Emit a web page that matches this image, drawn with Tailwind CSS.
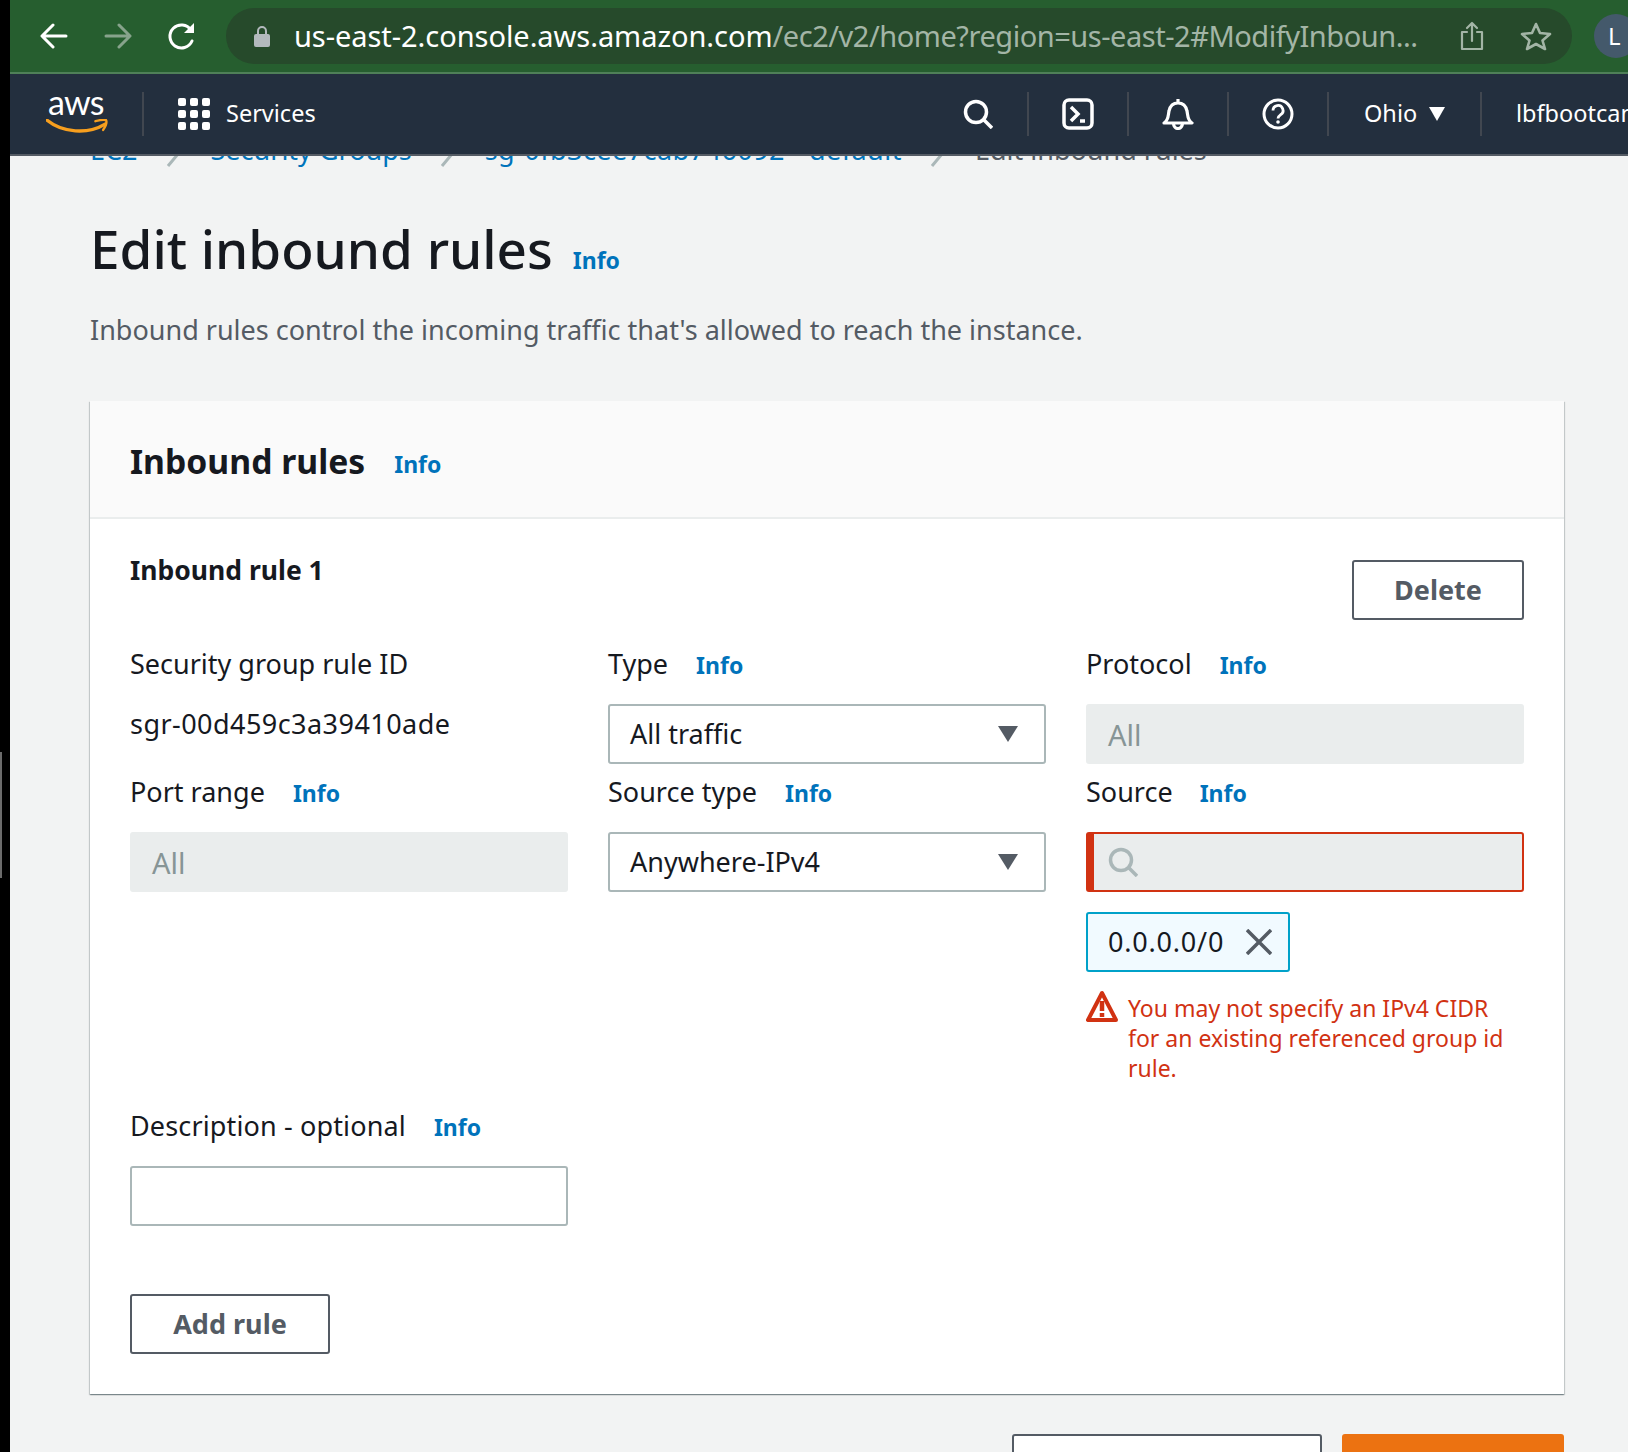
<!DOCTYPE html>
<html lang="en">
<head>
  <meta charset="UTF-8" />
  <title>Edit inbound rules</title>
  <script src="https://cdn.jsdelivr.net/npm/@tailwindcss/browser@4"></script>
</head>
<body class="bg-black font-['Noto_Sans',sans-serif] text-[#16191f]">
  <div class="flex w-[1628px] h-[1452px] overflow-hidden relative">
    <div class="w-[10px] shrink-0 bg-black">
      <div class="w-[2px] h-[126px] mt-[752px] bg-[#6b6b6b]"></div>
    </div>
    <div class="w-[1618px] shrink-0 flex flex-col overflow-hidden bg-[#f2f3f3]">

      <!-- browser toolbar -->
      <div class="h-[74px] shrink-0 bg-[#265e2f] border-b-2 border-[#4f8058] flex items-center">
        <svg class="w-[28px] h-[28px] ml-[30px] shrink-0" viewBox="0 0 28 28" fill="none" stroke="#fff" stroke-width="3" stroke-linecap="round" stroke-linejoin="round"><path d="M26 14H3M13 3 2 14l11 11"/></svg>
        <svg class="w-[28px] h-[28px] ml-[36px] shrink-0" viewBox="0 0 28 28" fill="none" stroke="#87a38c" stroke-width="3" stroke-linecap="round" stroke-linejoin="round"><path d="M2 14h23M15 3l11 11-11 11"/></svg>
        <svg class="w-[30px] h-[30px] ml-[35px] shrink-0" viewBox="0 0 30 30" fill="none" stroke="#fff" stroke-width="3" stroke-linecap="round"><path d="M25 20a11.500 11.500 0 1 1-1-11"/><path d="M27 2v10H17z" fill="#fff" stroke="none"/></svg>
        <div class="ml-[29px] w-[1346px] h-[56px] shrink-0 rounded-full bg-[#264a2b] flex items-center">
          <svg class="w-[18px] h-[24px] ml-[27px] shrink-0" viewBox="0 0 18 24"><path d="M5 11V7a4 4 0 0 1 8 0v4" fill="none" stroke="#b3b9bd" stroke-width="2"/><rect x="1" y="10" width="16" height="13" rx="2" fill="#b3b9bd"/></svg>
          <p class="ml-[23px] w-[1134px] shrink-0 text-[29px] leading-[56px] whitespace-nowrap overflow-hidden"><span class="text-white tracking-[-0.05px]">us-east-2.console.aws.amazon.com</span><span class="text-[#a3b5a6] tracking-[-0.47px]">/ec2/v2/home?region=us-east-2#ModifyInboun...</span></p>
          <svg class="w-[24px] h-[30px] ml-[32px] shrink-0" viewBox="0 0 24 30" fill="none" stroke="#a3b5a6" stroke-width="2.200" stroke-linecap="round" stroke-linejoin="round"><path d="M7 11H2v17h20V11h-5M12 20V2M7 7l5-5 5 5"/></svg>
          <svg class="w-[32px] h-[30px] ml-[36px] shrink-0" viewBox="0 0 32 30" fill="none" stroke="#a3b5a6" stroke-width="2.600" stroke-linejoin="round"><path d="m16 3 4 9 10 1-7.500 6.500L25 28l-9-5-9 5 2.500-8.500L2 13l10-1z"/></svg>
        </div>
        <div class="ml-[22px] w-[44px] h-[44px] shrink-0 rounded-full bg-[#44596b] text-white text-[24px] leading-[44px] pl-[14px]">L</div>
      </div>

      <!-- aws console nav -->
      <div class="h-[82px] shrink-0 relative z-10 bg-[#232f3e] border-b-2 border-[#545b64] flex items-center text-white">
        <div class="w-[134px] h-[44px] shrink-0 border-r-2 border-[#414750] pl-[36px] flex flex-col items-start">
          <span class="text-[34px] leading-[34px] -mt-[7px] ml-[2px] font-['Lato',sans-serif] tracking-tight">aws</span>
          <svg class="w-[62px] h-[15px] mt-0" viewBox="0 0 64 15" fill="none"><path d="M1 1c16 13 42 15 60 4" stroke="#f79f1e" stroke-width="3.500" stroke-linecap="round"/><path d="M51 2c4-1 9-2 11-1 1 2-1 7-3 10" stroke="#f79f1e" stroke-width="2.500" stroke-linecap="round"/></svg>
        </div>
        <div class="ml-[34px] w-[32px] h-[32px] shrink-0 grid grid-cols-3 gap-[4px]">
          <i class="rounded-[2px] bg-white"></i><i class="rounded-[2px] bg-white"></i><i class="rounded-[2px] bg-white"></i>
          <i class="rounded-[2px] bg-white"></i><i class="rounded-[2px] bg-white"></i><i class="rounded-[2px] bg-white"></i>
          <i class="rounded-[2px] bg-white"></i><i class="rounded-[2px] bg-white"></i><i class="rounded-[2px] bg-white"></i>
        </div>
        <span class="ml-[16px] w-[703px] shrink-0 text-[23.500px]">Services</span>
        <div class="w-[100px] h-[44px] shrink-0 border-r-2 border-[#414750] flex items-center justify-center">
          <svg class="w-[30px] h-[30px]" viewBox="0 0 30 30" fill="none" stroke="#fff" stroke-width="3.500"><circle cx="13" cy="13" r="10.500"/><path d="m20 20 9 9"/></svg>
        </div>
        <div class="w-[100px] h-[44px] shrink-0 border-r-2 border-[#414750] flex items-center justify-center">
          <svg class="w-[32px] h-[32px]" viewBox="0 0 32 32" fill="none" stroke="#fff" stroke-width="3.500"><rect x="2" y="2" width="28" height="28" rx="5"/><path d="m9 9 7 7-7 7M18 23h5"/></svg>
        </div>
        <div class="w-[100px] h-[44px] shrink-0 border-r-2 border-[#414750] flex items-center justify-center">
          <svg class="w-[32px] h-[32px]" viewBox="0 0 32 32" fill="none" stroke="#fff" stroke-width="3.200" stroke-linejoin="round"><path d="M16 1v4M2 25c5-3 4-8 5-12 1-5 4-8 9-8s8 3 9 8c1 4 0 9 5 12z"/><path d="M11.500 25a4.500 5.500 0 1 0 9 0"/></svg>
        </div>
        <div class="w-[100px] h-[44px] shrink-0 border-r-2 border-[#414750] flex items-center justify-center">
          <svg class="w-[32px] h-[32px]" viewBox="0 0 32 32" fill="none" stroke="#fff" stroke-width="3"><circle cx="16" cy="16" r="14"/><path d="M11 12.500a5 5 0 1 1 7.500 4.300c-1.500 1-2.500 1.700-2.500 3.700" stroke-width="2.800"/><circle cx="16" cy="24" r="1.800" fill="#fff" stroke="none"/></svg>
        </div>
        <div class="w-[153px] h-[44px] shrink-0 border-r-2 border-[#414750] flex items-center pl-[35px]">
          <span class="text-[23.500px]">Ohio</span>
          <svg class="w-[16px] h-[14px] ml-[12px]" viewBox="0 0 16 14"><path d="M0 0h16L8 14z" fill="#fff"/></svg>
        </div>
        <span class="ml-[34px] text-[23.500px] whitespace-nowrap">lbfbootcamp</span>
      </div>

      <!-- page body -->
      <div class="pl-[80px] pr-[64px] overflow-hidden">
        <div class="-mt-[21px] h-[30px] flex items-center text-[27px] text-[#0073bb] whitespace-nowrap">
          <span>EC2</span>
          <svg class="w-[14px] h-[26px] ml-[28px] mr-[31px] translate-y-[4px]" viewBox="0 0 14 26" fill="none" stroke="#aab7b8" stroke-width="3"><path d="m2 1 10 12L2 25"/></svg>
          <span>Security Groups</span>
          <svg class="w-[14px] h-[26px] ml-[28px] mr-[31px] translate-y-[4px]" viewBox="0 0 14 26" fill="none" stroke="#aab7b8" stroke-width="3"><path d="m2 1 10 12L2 25"/></svg>
          <span class="tracking-[0.45px]">sg-0fb3cee7cab746092 - default</span>
          <svg class="w-[14px] h-[26px] ml-[28px] mr-[31px] translate-y-[4px]" viewBox="0 0 14 26" fill="none" stroke="#aab7b8" stroke-width="3"><path d="m2 1 10 12L2 25"/></svg>
          <span class="text-[#545b64]">Edit inbound rules</span>
        </div>

        <div class="mt-[45px] flex items-baseline">
          <h1 class="text-[53px] leading-[78px] font-medium">Edit inbound rules</h1>
          <a class="ml-[20px] text-[23px] font-bold text-[#0073bb]">Info</a>
        </div>
        <p class="mt-[22px] text-[27px] leading-[40px] text-[#545b64]">Inbound rules control the incoming traffic that's allowed to reach the instance.</p>

        <!-- card -->
        <div class="mt-[51px] h-[993px] bg-white shadow-[0_1px_1px_0_rgba(0,28,36,0.3),1px_1px_1px_0_rgba(0,28,36,0.15),-1px_1px_1px_0_rgba(0,28,36,0.15)]">
          <div class="h-[118px] pt-[5px] bg-[#fafafa] border-b-2 border-[#eaeded] px-[40px] flex items-center">
            <h2 class="text-[33.700px] font-bold">Inbound rules</h2>
            <a class="ml-[29px] mt-[6px] text-[23px] font-bold text-[#0073bb]">Info</a>
          </div>
          <div class="px-[40px] pt-[41px]">
            <div class="flex justify-between h-[88px]">
              <h3 class="-mt-[1px] text-[26.500px] font-bold leading-[22px]">Inbound rule 1</h3>
              <button class="w-[172px] h-[60px] rounded-[3px] border-2 border-[#545b64] bg-white text-[27px] font-bold text-[#545b64]">Delete</button>
            </div>
            <div class="grid grid-cols-3 gap-x-[40px] gap-y-[12px]">
              <div class="h-[116px]">
                <p class="h-[32px] text-[27px] leading-[32px]">Security group rule ID</p>
                <p class="mt-[28px] text-[27px] leading-[32px] tracking-[0.45px]">sgr-00d459c3a39410ade</p>
              </div>
              <div>
                <p class="h-[32px] text-[27px] leading-[32px]">Type<a class="ml-[28px] text-[23px] font-bold text-[#0073bb]">Info</a></p>
                <div class="mt-[24px] h-[60px] rounded-[3px] border-2 border-[#aab7b8] bg-white pl-[20px] pr-[26px] flex items-center justify-between text-[27px]">
                  <span>All traffic</span>
                  <svg class="w-[20px] h-[16px]" viewBox="0 0 20 16"><path d="M0 0h20L10 16z" fill="#545b64"/></svg>
                </div>
              </div>
              <div>
                <p class="h-[32px] text-[27px] leading-[32px]">Protocol<a class="ml-[28px] text-[23px] font-bold text-[#0073bb]">Info</a></p>
                <div class="mt-[24px] h-[60px] rounded-[3px] bg-[#eaeded] pl-[22px] pt-[2px] flex items-center text-[29px] text-[#879596]">All</div>
              </div>

              <div>
                <p class="h-[32px] text-[27px] leading-[32px]">Port range<a class="ml-[28px] text-[23px] font-bold text-[#0073bb]">Info</a></p>
                <div class="mt-[24px] h-[60px] rounded-[3px] bg-[#eaeded] pl-[22px] pt-[2px] flex items-center text-[29px] text-[#879596]">All</div>
              </div>
              <div>
                <p class="h-[32px] text-[27px] leading-[32px]">Source type<a class="ml-[28px] text-[23px] font-bold text-[#0073bb]">Info</a></p>
                <div class="mt-[24px] h-[60px] rounded-[3px] border-2 border-[#aab7b8] bg-white pl-[20px] pr-[26px] flex items-center justify-between text-[27px]">
                  <span>Anywhere-IPv4</span>
                  <svg class="w-[20px] h-[16px]" viewBox="0 0 20 16"><path d="M0 0h20L10 16z" fill="#545b64"/></svg>
                </div>
              </div>
              <div class="h-[322px]">
                <p class="h-[32px] text-[27px] leading-[32px]">Source<a class="ml-[27px] text-[23px] font-bold text-[#0073bb]">Info</a></p>
                <div class="mt-[24px] h-[60px] rounded-[3px] border-2 border-l-[8px] border-[#d13212] bg-[#eaeded] pl-[14px] flex items-center">
                  <svg class="w-[30px] h-[30px]" viewBox="0 0 30 30" fill="none" stroke="#aab7b8" stroke-width="3.500"><circle cx="13" cy="13" r="10.500"/><path d="m20 20 9 9"/></svg>
                </div>
                <div class="mt-[20px] w-[204px] h-[60px] rounded-[3px] border-2 border-[#00a1c9] bg-[#f1faff] pl-[20px] flex items-center text-[27px]">
                  <span class="tracking-[0.8px]">0.0.0.0/0</span>
                  <svg class="w-[26px] h-[26px] ml-[22px]" viewBox="0 0 26 26" fill="none" stroke="#545b64" stroke-width="3.500"><path d="m1 1 24 24M25 1 1 25"/></svg>
                </div>
                <div class="mt-[21px] flex items-start text-[23px] leading-[30px] text-[#d13212]">
                  <svg class="w-[32px] h-[32px] shrink-0 -mt-[3px]" viewBox="0 0 32 32" fill="none"><path d="M16 3 2 30h28z" stroke="#d13212" stroke-width="4" stroke-linejoin="round"/><path d="M16 11v10M16 23v4" stroke="#d13212" stroke-width="4.500"/></svg>
                  <p class="ml-[10px]">You may not specify an IPv4 CIDR for an existing referenced group id rule.</p>
                </div>
              </div>

              <div>
                <p class="h-[32px] text-[27px] leading-[32px] whitespace-nowrap"><span class="tracking-[0.14px]">Description - optional</span><a class="ml-[28px] text-[23px] font-bold text-[#0073bb]">Info</a></p>
                <div class="mt-[24px] h-[60px] rounded-[3px] border-2 border-[#aab7b8] bg-white"></div>
              </div>
            </div>
            <button class="mt-[68px] w-[200px] h-[60px] rounded-[3px] border-2 border-[#545b64] bg-white text-[27px] font-bold text-[#545b64]">Add rule</button>
          </div>
        </div>

        <div class="mt-[40px] flex justify-end gap-[20px]">
          <button class="w-[310px] h-[60px] rounded-[3px] border-2 border-[#545b64] bg-white text-[27px] font-bold text-[#545b64]">Cancel</button>
          <button class="w-[222px] h-[60px] rounded-[3px] bg-[#ec7211] text-[27px] font-bold text-white">Save rules</button>
        </div>
      </div>
    </div>
  </div>
</body>
</html>
